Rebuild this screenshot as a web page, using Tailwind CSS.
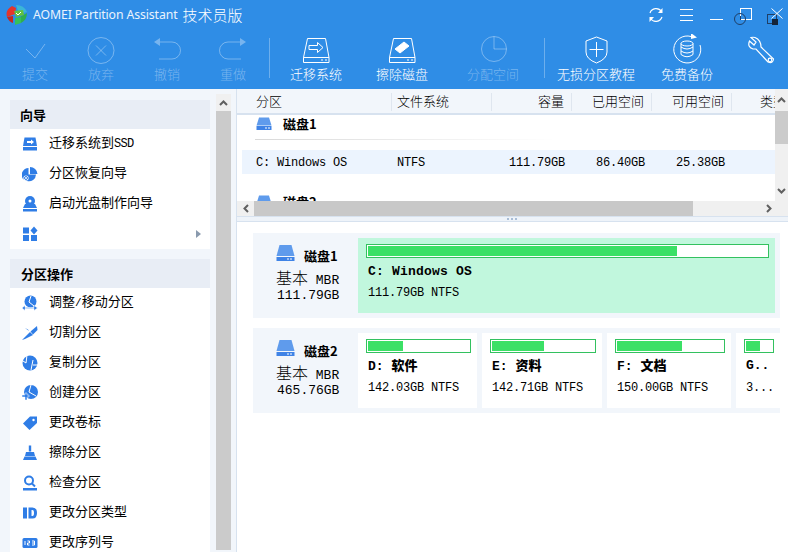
<!DOCTYPE html>
<html lang="zh"><head><meta charset="utf-8"><title>AOMEI Partition Assistant</title>
<script src="https://cdn.jsdelivr.net/npm/@tailwindcss/browser@4"></script></head>
<body class="w-[788px] h-[552px] overflow-hidden bg-white text-black text-[13px] leading-4 font-['Liberation_Mono','Noto_Sans_CJK_SC',monospace]">
<header class="relative h-[89px] bg-[#2f8de6] text-white">
  <div class="h-[32px] flex items-center pl-[6px] pb-[3px]">
    <svg class="w-[22px] h-[20px]" viewBox="0 0 22 20"><path d="M6 1 L10 3 L9 9 L1 12 Q-1 5 6 1Z" fill="#e5352b"/><path d="M1 12 L7 11 L7 18 Q3 17 1 12Z" fill="#c5281f"/><path d="M10 0 Q18 0 21 7 L13 9 Z" fill="#3bb6d6"/><path d="M21 8 Q21 15 15 18 L14 12Z" fill="#2fae4e"/><path d="M9 20 L9 13 L15 12 L15 18Z" fill="#35c15a"/><path d="M8 6 L17 5 L18 10 L10 12Z" fill="#62c23f"/><path d="M10 8l2 2 3-3" stroke="#fff" fill="none"/></svg>
    <span class="ml-[5px] text-[12.25px] font-['Noto_Sans','Noto_Sans_CJK_SC',sans-serif] text-[#eaf3fd] tracking-[-0.1px]">AOMEI Partition Assistant</span>
    <span class="ml-[5px] text-[15px] font-['Noto_Sans_CJK_SC',sans-serif] font-light">技术员版</span>
  </div>
  <div class="flex h-[57px] pl-[2px] text-[13px] font-['Noto_Sans_CJK_SC',sans-serif] font-light">
    <div class="w-[66px] flex flex-col items-center text-white/35"><svg class="w-8 h-8 shrink-0 mt-[2px]" viewBox="0 0 32 32" fill="none" stroke="currentColor"><path d="M7 15 L16 24 L26 10"/></svg><span>提交</span></div>
    <div class="w-[66px] flex flex-col items-center text-white/35"><svg class="w-8 h-8 shrink-0 mt-[2px]" viewBox="0 0 32 32" fill="none" stroke="currentColor"><circle cx="16" cy="16.5" r="13"/><path d="M11 11.5 L21 21.5 M21 11.5 L11 21.5"/></svg><span>放弃</span></div>
    <div class="w-[66px] flex flex-col items-center text-white/35"><svg class="w-8 h-8 shrink-0 mt-[2px]" viewBox="0 0 32 32" fill="none" stroke="currentColor"><path d="M3 8 L9 4 V12Z" fill="currentColor" stroke="none"/><path d="M9 8 H21 a8.5 8.5 0 0 1 0 17 H8"/></svg><span>撤销</span></div>
    <div class="w-[66px] flex flex-col items-center text-white/35"><svg class="w-8 h-8 shrink-0 mt-[2px]" viewBox="0 0 32 32" fill="none" stroke="currentColor"><path d="M29 8 L23 4 V12Z" fill="currentColor" stroke="none"/><path d="M23 8 H11 a8.5 8.5 0 0 0 0 17 H24"/></svg><span>重做</span></div>
    <div class="w-[1px] h-[40px] mt-[6px] ml-[3px] mr-[3px] bg-white/30"></div>
    <div class="w-[86px] flex flex-col items-center"><svg class="w-8 h-8 shrink-0 mt-[2px]" viewBox="0 0 32 32" fill="none" stroke="#fff"><path d="M7.5 4.5 H25.5 L29 23.5 H3.5Z"/><path d="M3.5 23.5 H29 V28.5 H3.5Z"/><path d="M9 11.5 H17.5 V8.5 L23 13.5 L17.5 18.5 V15.5 H9Z"/><path d="M21 26 H23 M25 26 H27"/></svg><span>迁移系统</span></div>
    <div class="w-[86px] flex flex-col items-center"><svg class="w-8 h-8 shrink-0 mt-[2px]" viewBox="0 0 32 32" fill="none" stroke="#fff"><path d="M7.5 4.5 H25.5 L29 23.5 H3.5Z"/><path d="M3.5 23.5 H29 V28.5 H3.5Z"/><path d="M9 15 L18 8 L23 12 L14 19Z" fill="#fff"/><path d="M21 26 H23 M25 26 H27"/></svg><span>擦除磁盘</span></div>
    <div class="w-[96px] flex flex-col items-center text-white/35"><svg class="w-8 h-8 shrink-0 mt-[2px]" viewBox="0 0 32 32" fill="none" stroke="currentColor"><circle cx="17" cy="15" r="12.5"/><path d="M17 2.5 V15 H29.5"/></svg><span>分配空间</span></div>
    <div class="w-[1px] h-[40px] mt-[6px] ml-[3px] mr-[3px] bg-white/30"></div>
    <div class="w-[96px] flex flex-col items-center"><svg class="w-8 h-8 shrink-0 mt-[2px]" viewBox="0 0 32 32" fill="none" stroke="#fff"><path d="M16.5 3 L27 7 V18 Q27 25 16.5 29 Q6 25 6 18 V7Z"/><path d="M16.5 8 V23 M9.5 15.5 H23.5"/></svg><span>无损分区教程</span></div>
    <div class="w-[86px] flex flex-col items-center"><svg class="w-8 h-8 shrink-0 mt-[2px]" viewBox="0 0 32 32" fill="none" stroke="#fff"><path d="M20 2.5 A13.5 13.5 0 1 0 29 11"/><path d="M20 -1 L26 3.5 L20 5Z" fill="#fff" stroke="none"/><ellipse cx="16" cy="9.5" rx="6" ry="2.5"/><path d="M10 9.5 V20.5 Q16 25 22 20.5 V9.5 M10 13 Q16 17 22 13 M10 17 Q16 21 22 17"/></svg><span>免费备份</span></div>
    <div class="w-[58px] pl-[15px] flex flex-col"><svg class="w-8 h-8 shrink-0 mt-[3px]" viewBox="0 0 32 32" fill="none" stroke="#fff" stroke-width="1.2"><path d="M6 2.5 L11 7 L9 10 L4.5 6 Q2 12 8 14 L11 14 L23 27 Q28 29 28.5 24 L16 12 Q16 5 10 2.5 Q8 2 6 2.5Z"/><circle cx="25" cy="25" r="1.8"/></svg></div>
  </div>
  <svg class="absolute left-[648px] top-[7px] w-[16px] h-[16px]" viewBox="0 0 16 16" fill="none" stroke="#fff" stroke-width="1.2"><path d="M2 6 A6.5 6.5 0 0 1 13.5 4.5"/><path d="M14.5 1 V6 H10" fill="#fff" stroke="none"/><path d="M14 10 A6.5 6.5 0 0 1 2.5 11.5"/><path d="M1.5 15 V10 H6" fill="#fff" stroke="none"/></svg>
  <div class="absolute left-[680px] top-[9px] w-[13px] h-[12px] border-y border-white flex items-center"><div class="w-full h-[1px] bg-white"></div></div>
  <div class="absolute left-[710px] top-[19px] w-[13px] h-[1px] bg-white"></div>
  <div class="absolute left-[740px] top-[8px] w-[12px] h-[12px] border border-white"></div>
  <div class="absolute left-[734px] top-[13px] w-[12px] h-[12px] rounded-full border border-[#1f3f66]"><div class="absolute left-[5px] top-[2px] w-[1px] h-[4px] bg-[#1f3f66]"></div></div>
  <div class="absolute left-[767px] top-[14px] w-[10px] h-[10px] border border-[#1f3f66]"></div>
  <div class="absolute left-[772px] top-[19px] w-[6px] h-[6px] bg-[#14243a]"></div>
  <svg class="absolute left-[771px] top-[8px] w-[12px] h-[11px]" viewBox="0 0 12 11" stroke="#fff"><path d="M0.5 0.5 L11.5 10.5 M11.5 0.5 L0.5 10.5"/></svg>
</header>
<main class="flex h-[463px]">
  <aside class="w-[237px] shrink-0 bg-[#f2f6fb] border-r border-[#d7e2ef] flex pl-[10px] pt-[11px]">
    <div class="w-[200px] shrink-0">
      <h2 class="h-[29px] bg-[#e8edf5] pl-[10px] flex items-center font-bold text-[13px] font-['Noto_Sans_CJK_SC',sans-serif]">向导</h2>
      <ul class="bg-white h-[120px]">
        <li class="h-[30px] flex items-center pl-[12px] gap-[11px]"><svg class="w-4 h-4 shrink-0" viewBox="0 0 16 16" fill="#2f7de6"><path d="M2.5 1.5 H13.5 L15 10 H1Z"/><rect x="1" y="11" width="14" height="3.5"/><path d="M5 5 H9 V3.5 L12 6 L9 8.5 V7 H5Z" fill="#fff"/></svg><span>迁移系统到<span class="text-[12px] tracking-[-0.7px]">SSD</span></span></li>
        <li class="h-[30px] flex items-center pl-[12px] gap-[11px]"><svg class="w-4 h-4 shrink-0" viewBox="0 0 16 16" fill="#2f7de6"><path d="M8 1 A7.5 7.5 0 0 1 15.5 8 H8Z"/><path d="M6.5 2 V8.5 H14 A7 7 0 0 1 5 15 L1 13 A7 7 0 0 1 6.5 2Z"/><circle cx="4" cy="12" r="2.6" fill="#fff"/><circle cx="4" cy="12" r="1.5" fill="none" stroke="#2f7de6"/></svg><span>分区恢复向导</span></li>
        <li class="h-[30px] flex items-center pl-[12px] gap-[11px]"><svg class="w-4 h-4 shrink-0" viewBox="0 0 16 16" fill="#2f7de6"><circle cx="8" cy="5" r="5"/><circle cx="8" cy="5" r="1.5" fill="#fff"/><path d="M3 8 H13 L15 12 H1Z"/><rect x="1" y="13" width="14" height="2.5"/></svg><span>启动光盘制作向导</span></li>
        <li class="h-[30px] flex items-center pl-[12px] pr-[9px]"><svg class="w-4 h-4 shrink-0" viewBox="0 0 16 16" fill="#2f7de6"><rect x="1" y="1.5" width="6" height="6"/><rect x="1" y="9" width="6" height="6"/><rect x="9" y="9" width="6" height="6"/><path d="M12 0.5 L15.5 4.5 L12 8.5 L8.5 4.5Z"/></svg><span class="ml-auto w-0 h-0 border-y-[4px] border-y-transparent border-l-[5px] border-l-[#8a9aae]"></span></li>
      </ul>
      <h2 class="mt-[10px] h-[29px] bg-[#e8edf5] pl-[11px] flex items-center font-bold text-[13px] font-['Noto_Sans_CJK_SC',sans-serif]">分区操作</h2>
      <ul class="bg-white">
        <li class="h-[30px] flex items-center pl-[12px] gap-[11px]"><svg class="w-4 h-4 shrink-0" viewBox="0 0 16 16" fill="#2f7de6"><circle cx="8.5" cy="6.5" r="6"/><path d="M9 1 L7 7 L12 11" stroke="#fff" fill="none"/><path d="M0 13 L3 10.5 V12.5 H12 V10.5 L15.5 13 L12 15.5 V13.5 H3 V15.5Z" stroke="#fff" stroke-width=".5"/></svg><span>调整<span class="text-[11px]">/</span>移动分区</span></li>
        <li class="h-[30px] flex items-center pl-[12px] gap-[11px]"><svg class="w-4 h-4 shrink-0" viewBox="0 0 16 16" fill="#2f7de6"><path d="M0 15 L8 7 L11 10 L3 14Z"/><path d="M15 1 L15.5 5 L11 9.5 L8.5 6.5Z"/><path d="M3 3 L6 4.5 L7 6Z"/></svg><span>切割分区</span></li>
        <li class="h-[30px] flex items-center pl-[12px] gap-[11px]"><svg class="w-4 h-4 shrink-0" viewBox="0 0 16 16" fill="#2f7de6"><circle cx="8" cy="8" r="7.5"/><path d="M5 0 L4 8 L1 6 M11 5 L9 15 M11 10 H16" stroke="#fff" fill="none"/></svg><span>复制分区</span></li>
        <li class="h-[30px] flex items-center pl-[12px] gap-[11px]"><svg class="w-4 h-4 shrink-0" viewBox="0 0 16 16" fill="#2f7de6"><circle cx="9" cy="7" r="7"/><path d="M9 0 L7 7 L14 11" stroke="#fff" fill="none"/><path d="M3 8 H5 V10 H7 V12 H5 V15 H3 V12 H0 V10 H3Z" stroke="#fff" stroke-width=".5"/></svg><span>创建分区</span></li>
        <li class="h-[30px] flex items-center pl-[12px] gap-[11px]"><svg class="w-4 h-4 shrink-0" viewBox="0 0 16 16" fill="#2f7de6"><path d="M8 1.5 H15 V8 L7.5 15 L1 8.5Z"/><circle cx="11.5" cy="5" r="1.2" fill="#fff"/></svg><span>更改卷标</span></li>
        <li class="h-[30px] flex items-center pl-[12px] gap-[11px]"><svg class="w-4 h-4 shrink-0" viewBox="0 0 16 16" fill="#2f7de6"><rect x="6.8" y="0.5" width="2.4" height="6"/><path d="M4 7 H12 L13 11 H3Z"/><path d="M2.5 11.5 H13.5 L15 15 H1Z"/></svg><span>擦除分区</span></li>
        <li class="h-[30px] flex items-center pl-[12px] gap-[11px]"><svg class="w-4 h-4 shrink-0" viewBox="0 0 16 16" fill="none" stroke="#2f7de6"><circle cx="7" cy="5.5" r="4" stroke-width="2"/><path d="M10 8.5 L13 11.5" stroke-width="2"/><rect x="1" y="13" width="14" height="2.5" fill="#2f7de6" stroke="none"/></svg><span>检查分区</span></li>
        <li class="h-[30px] flex items-center pl-[12px] gap-[11px]"><svg class="w-4 h-4 shrink-0" viewBox="0 0 16 16" fill="#2f7de6"><rect x="1" y="2.5" width="4" height="11"/><path fill-rule="evenodd" d="M6.5 2.5 H10.5 Q15 2.5 15 8 Q15 13.5 10.5 13.5 H6.5Z M9.5 5 V11 H10.5 Q12 11 12 8 Q12 5 10.5 5Z"/></svg><span>更改分区类型</span></li>
        <li class="h-[30px] flex items-center pl-[12px] gap-[11px]"><svg class="w-4 h-4 shrink-0" viewBox="0 0 16 16"><rect x="0.5" y="3" width="15" height="10" rx="1.5" fill="#2f7de6"/><path d="M3 6 V10 M5.5 6 H7.5 V8 H5.5 V10 H7.5 M10 6 H12.5 V10 H10 M10 8 H12.5" stroke="#fff" fill="none"/></svg><span>更改序列号</span></li>
      </ul>
    </div>
    <div class="ml-[6px] w-[15px] -mt-[6px] h-[456px] bg-[#f0f0f0] flex flex-col">
      <div class="h-[17px] flex items-center justify-center"><svg class="w-[9px] h-[6px]" viewBox="0 0 9 6" fill="none" stroke="#606060" stroke-width="2"><path d="M1 5 L4.5 1.5 L8 5"/></svg></div>
      <div class="flex-1 bg-[#cbcbcb]"></div>
    </div>
  </aside>
  <section class="flex-1 min-w-0 flex flex-col">
    <div class="h-[127px] flex relative">
      <div class="w-[538px] shrink-0">
        <div class="h-[26px] bg-[#f2f6fb] border-b-2 border-[#d7e2ef] flex items-start pt-[4px] overflow-hidden font-['Noto_Sans_CJK_SC',sans-serif] font-light">
          <div class="w-[155px] shrink-0 pl-[19px] h-[18px] border-r border-[#dfe6ef]">分区</div>
          <div class="w-[100px] shrink-0 pl-[5px] h-[18px] border-r border-[#dfe6ef]">文件系统</div>
          <div class="w-[80px] shrink-0 pr-[7px] h-[18px] text-right border-r border-[#dfe6ef]">容量</div>
          <div class="w-[80px] shrink-0 pr-[7px] h-[18px] text-right border-r border-[#dfe6ef]">已用空间</div>
          <div class="w-[80px] shrink-0 pr-[7px] h-[18px] text-right border-r border-[#dfe6ef]">可用空间</div>
          <div class="w-[43px] shrink-0 pl-[28px] whitespace-nowrap overflow-hidden">类型</div>
        </div>
        <div class="h-[86px] overflow-hidden bg-white">
          <div class="h-[24px] pb-[6px] pl-[19px] flex items-center gap-[11px]"><svg class="w-[16px] h-[14px]" viewBox="0 0 16 14" fill="#5f9bec"><path d="M3 0.5 H13 L15.5 8.5 H0.5Z"/><path d="M0.5 9 H15.5 V13 H0.5Z" fill="#3f83e6"/><path d="M9 11 H11 M12 11 H14" stroke="#fff"/></svg><b class="font-['Noto_Sans_CJK_SC',sans-serif] text-[13px]">磁盘1</b></div>
          <div class="ml-[18px] w-[300px] h-[1px] bg-gradient-to-r from-[#d9d9d9] to-white"></div>
          <div class="mt-[10px] ml-[5px] h-[24px] pt-[1px] bg-[#ecf4fe] flex items-center text-[12px] tracking-[-0.2px]">
            <div class="w-[150px] shrink-0 pl-[14px]">C: Windows OS</div>
            <div class="w-[100px] shrink-0 pl-[5px]">NTFS</div>
            <div class="w-[80px] shrink-0 pr-[7px] text-right">111.79GB</div>
            <div class="w-[80px] shrink-0 pr-[7px] text-right">86.40GB</div>
            <div class="w-[80px] shrink-0 pr-[7px] text-right">25.38GB</div>
          </div>
          <div class="mt-[20px] pl-[19px] flex items-center gap-[11px]"><svg class="w-[16px] h-[14px]" viewBox="0 0 16 14" fill="#5f9bec"><path d="M3 0.5 H13 L15.5 8.5 H0.5Z"/><path d="M0.5 9 H15.5 V13 H0.5Z" fill="#3f83e6"/></svg><b class="font-['Noto_Sans_CJK_SC',sans-serif] text-[13px]">磁盘2</b></div>
        </div>
        <div class="h-[15px] flex bg-[#f0f0f0]"><div class="w-[17px] flex items-center justify-center"><svg class="w-[6px] h-[9px]" viewBox="0 0 6 9" fill="none" stroke="#606060" stroke-width="2"><path d="M5 1 L1.5 4.5 L5 8"/></svg></div><div class="w-[439px] bg-[#c8c8c8]"></div></div>
      </div>
      <div class="w-[13px] shrink-0 flex flex-col bg-[#f0f0f0]">
        <div class="h-[22px] flex items-center justify-center"><svg class="w-[9px] h-[6px]" viewBox="0 0 9 6" fill="none" stroke="#606060" stroke-width="2"><path d="M1 5 L4.5 1.5 L8 5"/></svg></div>
        <div class="h-[33px] bg-[#cbcbcb]"></div>
        <div class="h-[57px] flex items-end justify-center pb-[7px]"><svg class="w-[9px] h-[6px]" viewBox="0 0 9 6" fill="none" stroke="#606060" stroke-width="2"><path d="M1 1 L4.5 4.5 L8 1"/></svg></div>
        <div class="h-[15px] flex items-center"><svg class="w-[6px] h-[9px] -ml-[9px]" viewBox="0 0 6 9" fill="none" stroke="#606060" stroke-width="2"><path d="M1 1 L4.5 4.5 L1 8"/></svg></div>
      </div>
    </div>
    <div class="h-[6px] bg-[#eef3f9] border-y border-[#d7e2ef] flex items-center justify-center gap-[2px] pr-[2px]"><i class="w-[2px] h-[2px] bg-[#a9bdd6]"></i><i class="w-[2px] h-[2px] bg-[#a9bdd6]"></i><i class="w-[2px] h-[2px] bg-[#a9bdd6]"></i></div>
    <div class="flex-1 pl-[16px] pr-[8px] pt-[11px] flex flex-col gap-[10px]">
      <div class="h-[85px] bg-[#f2f6fb] flex p-[5px] pl-0">
        <div class="w-[105px] shrink-0 pl-[23px] pt-[6px]">
          <div class="flex items-center gap-[9px] h-[18px]"><svg class="w-[19px] h-[16px]" viewBox="0 0 19 16" fill="#5f9bec"><path d="M3.5 0 H15.5 L18.5 11 H0.5Z"/><path d="M0.5 12 H18.5 V16 H0.5Z" fill="#3f83e6"/><path d="M11 14 H13 M14 14 H16" stroke="#fff"/></svg><b class="mt-[5px] font-['Noto_Sans_CJK_SC',sans-serif]">磁盘1</b></div>
          <div class="mt-[6px] h-[18px] leading-[18px] text-[13px] whitespace-nowrap"><span class="font-['Noto_Sans_CJK_SC',sans-serif] font-light text-[16px]">基本</span> MBR</div>
          <div class="mt-[1px] h-[18px] leading-[18px] text-[13px] pl-[1px]">111.79GB</div>
        </div>
        <div class="flex-1 bg-[#c1f7dd] pl-[8px] pr-[6px] pt-[6px]">
          <div class="h-[14px] border border-[#33c15f] bg-white p-[1px]"><div class="h-full bg-[#3be066]" style="width:77.5%"></div></div>
          <div class="mt-[6px] pl-[2px] h-[16px] font-bold text-[13px] tracking-[0.2px] whitespace-nowrap">C: Windows OS</div>
          <div class="mt-[5px] pl-[2px] text-[12px] tracking-[-0.2px] whitespace-nowrap">111.79GB NTFS</div>
        </div>
      </div>
      <div class="h-[85px] bg-[#f2f6fb] flex p-[5px] pl-0">
        <div class="w-[105px] shrink-0 pl-[23px] pt-[6px]">
          <div class="flex items-center gap-[9px] h-[18px]"><svg class="w-[19px] h-[16px]" viewBox="0 0 19 16" fill="#5f9bec"><path d="M3.5 0 H15.5 L18.5 11 H0.5Z"/><path d="M0.5 12 H18.5 V16 H0.5Z" fill="#3f83e6"/><path d="M11 14 H13 M14 14 H16" stroke="#fff"/></svg><b class="mt-[5px] font-['Noto_Sans_CJK_SC',sans-serif]">磁盘2</b></div>
          <div class="mt-[6px] h-[18px] leading-[18px] text-[13px] whitespace-nowrap"><span class="font-['Noto_Sans_CJK_SC',sans-serif] font-light text-[16px]">基本</span> MBR</div>
          <div class="mt-[1px] h-[18px] leading-[18px] text-[13px] pl-[1px]">465.76GB</div>
        </div>
        <div class="flex-1 flex gap-[5px]">
          <div class="w-[119px] bg-white pl-[8px] pr-[6px] pt-[6px]">
            <div class="h-[14px] border border-[#33c15f] p-[1px]"><div class="h-full bg-[#3be066]" style="width:34.5%"></div></div>
            <div class="mt-[4px] pl-[2px] h-[16px] font-bold whitespace-nowrap">D: <b class="font-['Noto_Sans_CJK_SC',sans-serif]">软件</b></div>
            <div class="mt-[7px] pl-[2px] text-[12px] tracking-[-0.2px] whitespace-nowrap">142.03GB NTFS</div>
          </div>
          <div class="w-[120px] bg-white pl-[8px] pr-[6px] pt-[6px]">
            <div class="h-[14px] border border-[#33c15f] p-[1px]"><div class="h-full bg-[#3be066]" style="width:51%"></div></div>
            <div class="mt-[4px] pl-[2px] h-[16px] font-bold whitespace-nowrap">E: <b class="font-['Noto_Sans_CJK_SC',sans-serif]">资料</b></div>
            <div class="mt-[7px] pl-[2px] text-[12px] tracking-[-0.2px] whitespace-nowrap">142.71GB NTFS</div>
          </div>
          <div class="w-[124px] bg-white pl-[8px] pr-[6px] pt-[6px]">
            <div class="h-[14px] border border-[#33c15f] p-[1px]"><div class="h-full bg-[#3be066]" style="width:61%"></div></div>
            <div class="mt-[4px] pl-[2px] h-[16px] font-bold whitespace-nowrap">F: <b class="font-['Noto_Sans_CJK_SC',sans-serif]">文档</b></div>
            <div class="mt-[7px] pl-[2px] text-[12px] tracking-[-0.2px] whitespace-nowrap">150.00GB NTFS</div>
          </div>
          <div class="flex-1 bg-white pl-[8px] pr-[7px] pt-[6px]">
            <div class="h-[14px] border border-[#33c15f] p-[1px]"><div class="h-full bg-[#3be066]" style="width:55%"></div></div>
            <div class="mt-[5px] pl-[2px] h-[16px] font-bold whitespace-nowrap">G..</div>
            <div class="mt-[6px] pl-[2px] text-[12px] tracking-[-0.2px] whitespace-nowrap">3...</div>
          </div>
        </div>
      </div>
    </div>
  </section>
</main>
</body></html>
